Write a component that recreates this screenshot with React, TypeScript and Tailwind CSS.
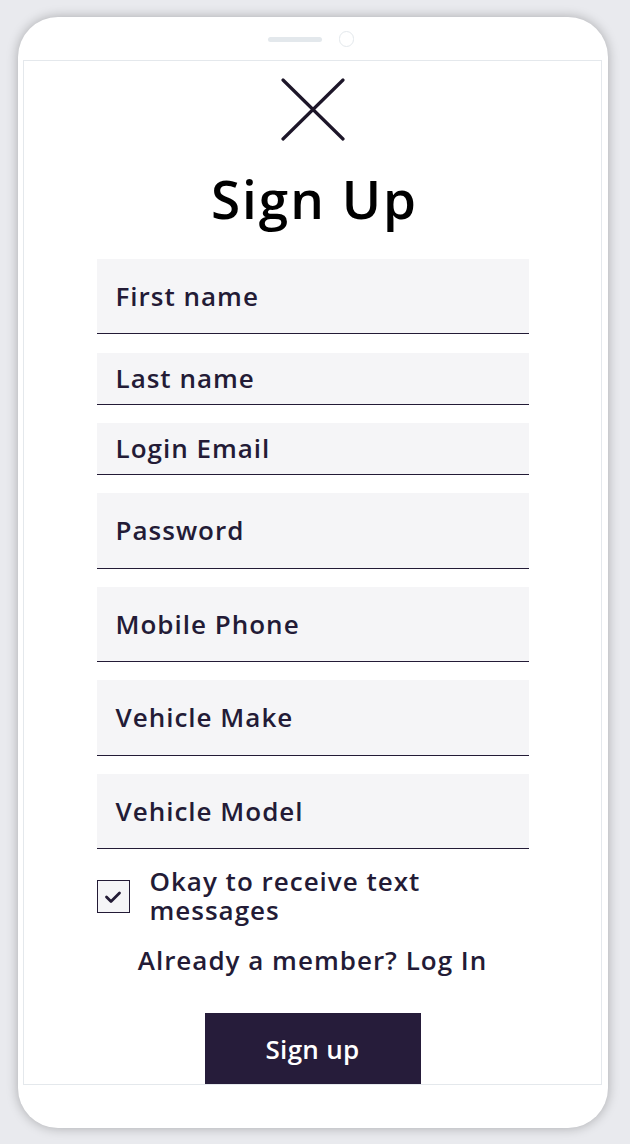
import React from "react";

const fields: { label: string; h: string; mt: string }[] = [
  { label: "First name", h: "h-[75px]", mt: "mt-0" },
  { label: "Last name", h: "h-[52px]", mt: "mt-[19px]" },
  { label: "Login Email", h: "h-[52px]", mt: "mt-[18px]" },
  { label: "Password", h: "h-[76px]", mt: "mt-[18px]" },
  { label: "Mobile Phone", h: "h-[75px]", mt: "mt-[18px]" },
  { label: "Vehicle Make", h: "h-[76px]", mt: "mt-[18px]" },
  { label: "Vehicle Model", h: "h-[75px]", mt: "mt-[18px]" },
];

export default function App() {
  return (
    <div
      className="min-h-screen w-full bg-[#e9eaee] pt-[17px] pl-[18px]"
      style={{ fontFamily: "'Open Sans', 'Noto Sans', sans-serif" }}
    >
      <div className="w-[590px] h-[1111px] rounded-[40px] bg-white shadow-[0_0_12px_rgba(0,0,0,0.28)] flex flex-col">
        <div className="h-[43px] flex items-center justify-center gap-[17px] pt-[1px] pr-[4px]">
          <div className="w-[54px] h-[5px] rounded-full bg-[#e3e8ec]" />
          <div className="w-[15px] h-[16px] rounded-full border border-[#e3e8ec]" />
        </div>
        <div className="ml-[5px] w-[579px] h-[1025px] border border-[#e4e8ec] overflow-hidden flex flex-col items-center">
          <svg
            width="64"
            height="63"
            viewBox="0 0 64 63"
            className="mt-[17px] shrink-0"
            fill="none"
            stroke="#1d1629"
            strokeWidth="3.2"
            strokeLinecap="round"
          >
            <line x1="2" y1="2" x2="62" y2="61" />
            <line x1="62" y1="2" x2="2" y2="61" />
          </svg>
          <h1 className="mt-[31px] text-[53px] leading-none font-semibold text-black tracking-[2px] pl-[4px]">
            Sign Up
          </h1>
          <div className="mt-[34px] w-[432px] flex flex-col">
            {fields.map((f) => (
              <div
                key={f.label}
                className={`${f.h} ${f.mt} bg-[#f5f5f7] border-b border-[#231b36] flex items-center pl-[19px] text-[26px] tracking-[1px] font-semibold text-[#231b36]`}
              >
                {f.label}
              </div>
            ))}
          </div>
          <div className="w-[432px] mt-[18px] flex items-start">
            <div className="mt-[13px] w-[33px] h-[33px] shrink-0 bg-[#f5f5f7] border border-[#231b36] flex items-center justify-center">
              <svg width="18" height="14" viewBox="0 0 18 14" fill="none" stroke="#231b36" strokeWidth="2.8" strokeLinecap="round" strokeLinejoin="round">
                <path d="M2.5 7 L7 11.5 L15.5 3" />
              </svg>
            </div>
            <div className="ml-[20px] text-[26px] leading-[29px] tracking-[1px] font-semibold text-[#231b36]">
              <div>Okay to receive text</div>
              <div>messages</div>
            </div>
          </div>
          <div className="mt-[20px] text-[26px] leading-[30px] tracking-[1px] font-semibold text-[#231b36] text-center">
            Already a member? Log In
          </div>
          <button className="mt-[38px] w-[216px] h-[74px] shrink-0 bg-[#261c3a] text-white text-[26px] tracking-[0.3px] font-semibold flex items-center justify-center pb-[2px]">
            Sign up
          </button>
        </div>
      </div>
    </div>
  );
}
